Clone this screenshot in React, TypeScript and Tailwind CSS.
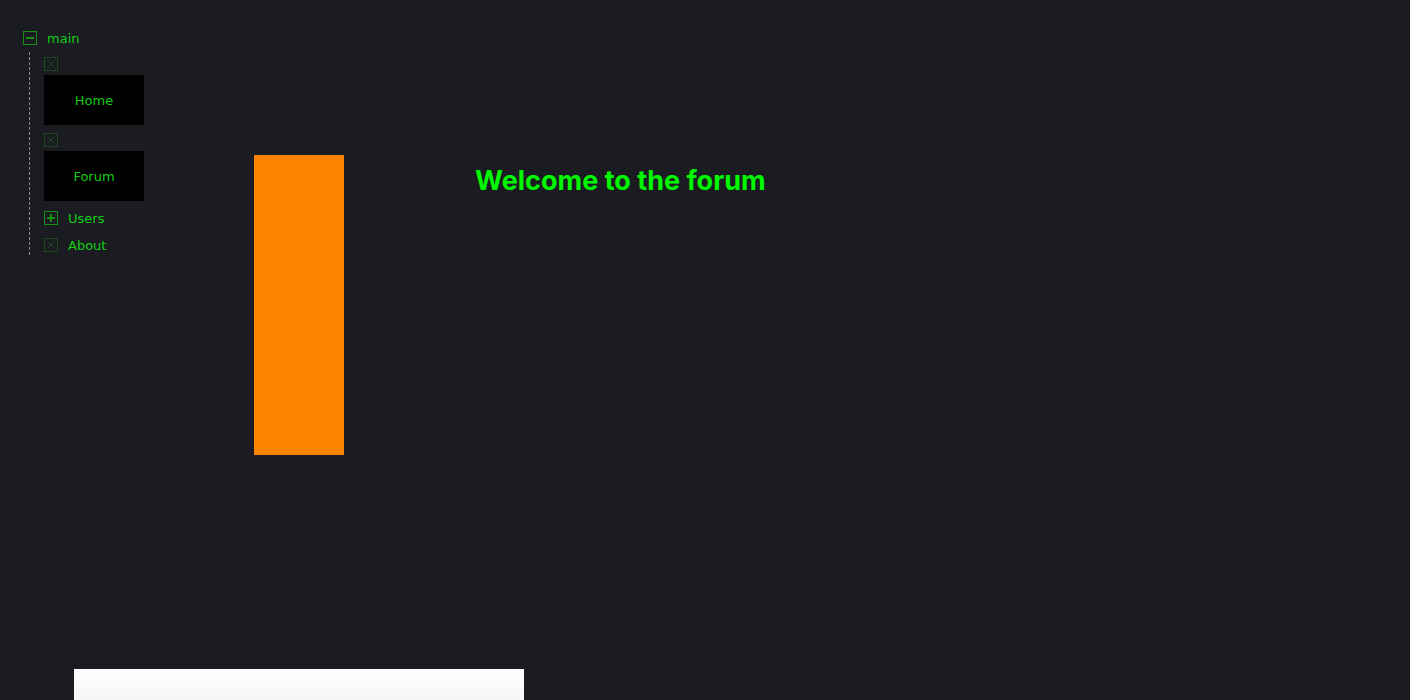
const ICON = 'flex h-[14px] w-[14px] shrink-0 items-center justify-center border';

function MinusIcon() {
  return (
    <span className={`${ICON} border-[#149114]`}>
      <span className="h-[2px] w-[8px] bg-[#149114]" />
    </span>
  );
}

function PlusIcon() {
  return (
    <span className={`${ICON} border-[#149114]`}>
      <svg width="10" height="10" viewBox="0 0 10 10">
        <path d="M5 1v8M1 5h8" stroke="#149114" strokeWidth="2" />
      </svg>
    </span>
  );
}

function LeafIcon() {
  return (
    <span className={`${ICON} border-[#1c4a1c]`}>
      <svg width="10" height="10" viewBox="0 0 10 10">
        <path d="M1.5 1.5l7 7M8.5 1.5l-7 7" stroke="#1c4a1c" strokeWidth="1" />
      </svg>
    </span>
  );
}

function NavBlock({ label }: { label: string }) {
  return (
    <div className="flex h-[50px] w-[100px] items-center justify-center bg-black pt-[2px] text-[13px] text-[#11cc11]">
      {label}
    </div>
  );
}

export default function App() {
  return (
    <div
      className="min-h-[700px] overflow-hidden bg-[#1b1c21] pl-[23px] pt-[31px]"
      style={{ fontFamily: '"DejaVu Sans", sans-serif' }}
    >
      <div className="flex items-start">
        {/* tree */}
        <div className="w-[121px] text-[13px] text-[#11cc11]">
          <div className="flex h-[14px] items-center gap-[10px]">
            <MinusIcon />
            <span className="pt-[2px] leading-[14px]">main</span>
          </div>
          <div className="ml-[6px] mt-[7px] border-l border-dashed border-[#8a8a8a] pb-[3px] pl-[14px] pt-[5px]">
            <LeafIcon />
            <div className="mt-[4px]">
              <NavBlock label="Home" />
            </div>
            <div className="mt-[8px]">
              <LeafIcon />
            </div>
            <div className="mt-[4px]">
              <NavBlock label="Forum" />
            </div>
            <div className="mt-[10px] flex h-[14px] items-center gap-[10px]">
              <PlusIcon />
              <span className="pt-[2px] leading-[14px]">Users</span>
            </div>
            <div className="mt-[13px] flex h-[14px] items-center gap-[10px]">
              <LeafIcon />
              <span className="pt-[2px] leading-[14px]">About</span>
            </div>
          </div>
        </div>

        {/* orange bar */}
        <div className="ml-[110px] mt-[124px] h-[300px] w-[90px] bg-[#ff8400]" />

        {/* heading */}
        <h1
          className="ml-[131px] mt-[134px] text-[27px] font-bold leading-[32px] text-[#00f800]"
          style={{ fontFamily: 'Inter, "Liberation Sans", sans-serif' }}
        >
          Welcome to the forum
        </h1>
      </div>

      {/* white panel at the bottom */}
      <div className="ml-[51px] mt-[214px] h-[60px] w-[450px] bg-gradient-to-b from-white to-[#eeeeef]" />
    </div>
  );
}
